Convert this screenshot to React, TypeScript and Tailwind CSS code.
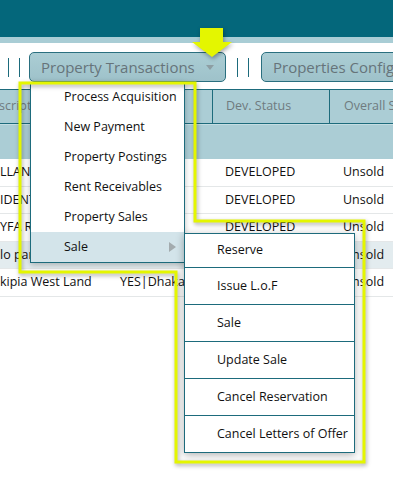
import React from 'react';

const rows = [
  { name: 'LLANTE Heights', loc: '', dev: 'DEVELOPED', status: 'Unsold', hover: false },
  { name: 'IDENTIAL Plot', loc: '', dev: 'DEVELOPED', status: 'Unsold', hover: false },
  { name: 'YFA Road Plot', loc: '', dev: 'DEVELOPED', status: 'Unsold', hover: false },
  { name: 'lo park View', loc: '', dev: 'DEVELOPED', status: 'Unsold', hover: true },
  { name: 'kipia West Land', loc: 'YES|Dhaka', dev: 'DEVELOPED', status: 'Unsold', hover: false },
];

const menuItems = ['Process Acquisition', 'New Payment', 'Property Postings', 'Rent Receivables', 'Property Sales'];
const subItems = ['Reserve', 'Issue L.o.F', 'Sale', 'Update Sale', 'Cancel Reservation', 'Cancel Letters of Offer'];

function Bars() {
  return (
    <div className="flex items-center gap-[10px] shrink-0">
      <div className="w-px h-[19px] bg-[#1d6b7c]" />
      <div className="w-px h-[19px] bg-[#1d6b7c]" />
    </div>
  );
}

export default function App() {
  return (
    <div className="relative w-[393px] h-[478px] overflow-hidden bg-white font-['Open_Sans',sans-serif] text-[12.5px] text-[#111]">
      {/* top bar */}
      <div className="h-[37px] bg-[#04677b]" />
      <div className="h-[6px] bg-[#a9cdd5]" />

      {/* toolbar */}
      <div className="flex items-center h-[46px] pt-[9px] pb-[7px] pl-[8px] whitespace-nowrap">
        <Bars />
        <div className="shrink-0 ml-[9px] w-[197px] h-[30px] flex items-center justify-between pl-[11px] pr-[11px] rounded-[5px] border border-[#2a6f7f] bg-gradient-to-b from-[#abcdd4] to-[#9ec2ca] text-[15px] text-[#66747a]">
          <span>Property Transactions</span>
          <span className="w-0 h-0 border-l-[4px] border-r-[4px] border-t-[5px] border-l-transparent border-r-transparent border-t-[#8d9ea3]" />
        </div>
        <div className="shrink-0 ml-[11px]">
          <Bars />
        </div>
        <div className="shrink-0 ml-[12px] w-[190px] h-[30px] flex items-center pl-[11px] rounded-[5px] border border-[#2a6f7f] bg-gradient-to-b from-[#abcdd4] to-[#9ec2ca] text-[15px] text-[#66747a]">
          Properties Configuration
        </div>
      </div>

      {/* table */}
      <div className="ml-[-13px] w-[480px]">
        <div className="flex h-[35px] bg-[#abcdd5] border-t border-b border-[#1d6b7c] text-[#6f7b7f] whitespace-nowrap">
          <div className="shrink-0 w-[120px] pl-[13px] flex items-center overflow-hidden">
            <span className="ml-[-17px]">Description</span>
          </div>
          <div className="shrink-0 w-[105px] border-l border-[#1d6b7c] pl-[13px] flex items-center">Location</div>
          <div className="shrink-0 w-[117px] border-l border-[#1d6b7c] pl-[13px] flex items-center">Dev. Status</div>
          <div className="flex-1 border-l border-[#1d6b7c] pl-[14px] flex items-center">Overall Status</div>
        </div>
        <div className="h-[35px] bg-[#abcdd5] border-t border-[#c5dde2]" />
        {rows.map((r, i) => (
          <div
            key={i}
            className={`flex h-[27.6px] items-center border-b border-[#e4e7e8] whitespace-nowrap ${r.hover ? 'bg-[#e3ecef]' : 'bg-white'}`}
          >
            <div className="shrink-0 w-[120px] pl-[13px] overflow-hidden">{r.name}</div>
            <div className="shrink-0 w-[105px] pl-[13px] overflow-hidden">{r.loc}</div>
            <div className="shrink-0 w-[117px] pl-[13px]">{r.dev}</div>
            <div className="flex-1 pl-[14px]">{r.status}</div>
          </div>
        ))}
      </div>

      {/* dropdown menu */}
      <div className="absolute left-[30px] top-[82px] w-[155px] bg-white border-l border-r border-b border-[#1d6b7c] shadow-[0_2px_6px_rgba(0,0,0,0.25)]">
        {menuItems.map((m) => (
          <div key={m} className="h-[30px] flex items-center pl-[33px] whitespace-nowrap">
            {m}
          </div>
        ))}
        <div className="h-[30px] flex items-center justify-between pl-[33px] pr-[8px] bg-[#d3e4ea]">
          <span>Sale</span>
          <span className="w-0 h-0 border-t-[5px] border-b-[5px] border-l-[7px] border-t-transparent border-b-transparent border-l-[#a3abae]" />
        </div>
      </div>

      {/* sub menu */}
      <div className="absolute left-[184px] top-[233px] w-[171px] bg-white border border-[#1d6b7c] shadow-[0_2px_8px_rgba(0,0,0,0.3)]">
        {subItems.map((s, i) => (
          <div
            key={s}
            className={`flex items-center pl-[32px] whitespace-nowrap ${i === 0 ? 'h-[33px]' : 'h-[37px] border-t border-[#1d6b7c]'}`}
          >
            {s}
          </div>
        ))}
      </div>

      {/* annotation overlay */}
      <svg
        className="absolute inset-0 pointer-events-none drop-shadow-[1px_2px_2px_rgba(0,0,0,0.35)]"
        width="393"
        height="478"
        viewBox="0 0 393 478"
      >
        <polygon
          points="20,83 195,83 195,221 364,221 364,462 176,462 176,272 20,272"
          fill="none"
          stroke="#e4f600"
          strokeWidth="3"
        />
        <polygon points="200,28 223,28 223,42 232,42 212,57 192,42 200,42" fill="#e4f600" />
      </svg>
    </div>
  );
}
